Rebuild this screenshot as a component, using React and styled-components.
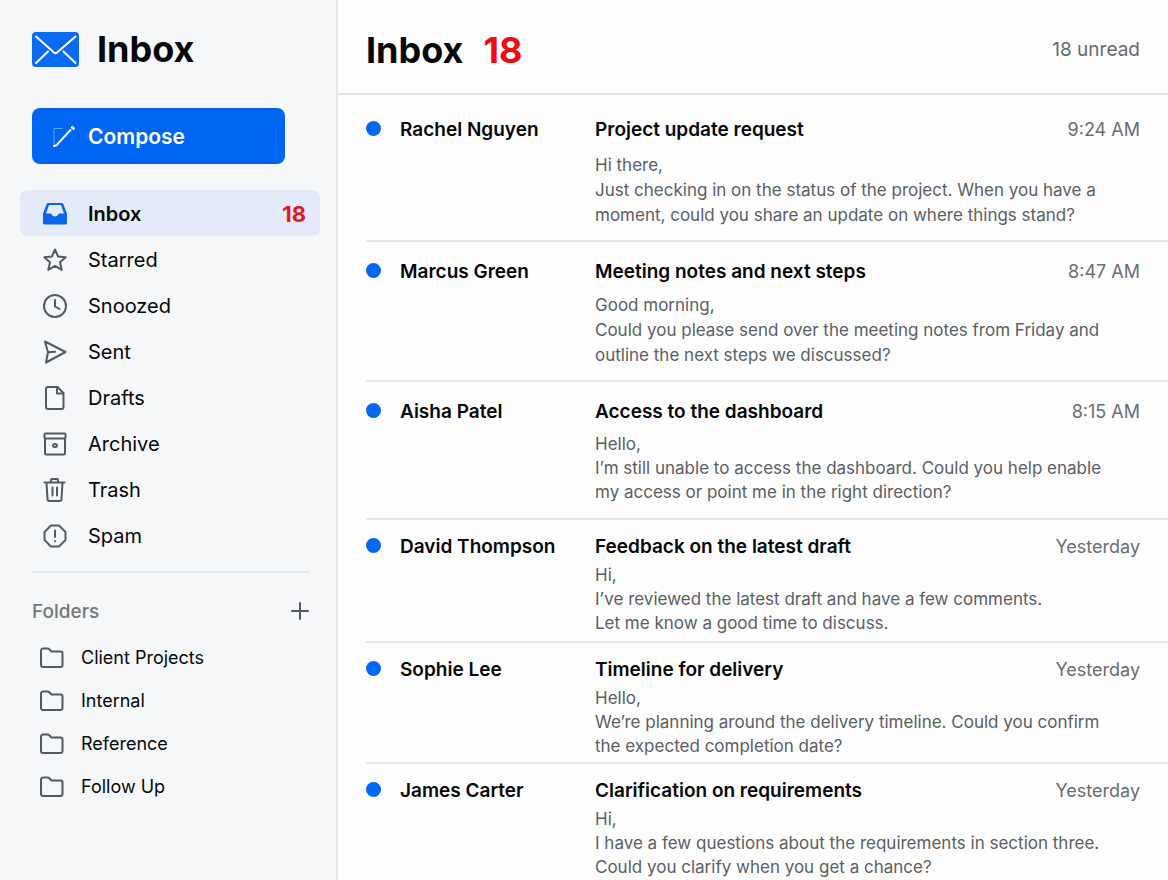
import React from 'react';
import styled, { createGlobalStyle } from 'styled-components';

const GlobalStyle = createGlobalStyle`
  * {
    box-sizing: border-box;
  }

  body {
    margin: 0;
    background: #fdfdfe;
    color: #060708;
    font-family: Inter, 'Liberation Sans', sans-serif;
  }

  button {
    border: 0;
    padding: 0;
    background: none;
    color: inherit;
    font: inherit;
    cursor: pointer;
  }
`;

// --- Layout ---
const Page = styled.div`
  display: grid;
  grid-template-columns: 338px minmax(0, 1fr);
  min-height: 100vh;
`;

const Sidebar = styled.aside`
  background: #f5f7f9;
  border-right: 2px solid #e6e8ee;
`;

const Main = styled.main`
  min-width: 0;
`;

// --- Sidebar ---
const Brand = styled.div`
  display: flex;
  align-items: center;
  gap: 18px;
  height: 98px;
  padding-left: 32px;
  font-size: 36px;
  font-weight: 700;
`;

const ComposeButton = styled.button`
  display: flex;
  align-items: center;
  gap: 12px;
  width: 253px;
  height: 56px;
  margin: 10px 0 26px 32px;
  padding-left: 20px;
  border-radius: 8px;
  background: #0066f2;
  color: #fff;
  font-size: 21px;
  font-weight: 600;
`;

const NavList = styled.ul`
  list-style: none;
  margin: 0;
  padding: 0 16px 0 20px;
`;

const NavLink = styled.a`
  display: flex;
  align-items: center;
  gap: 21px;
  height: 46px;
  padding: 1px 14px 0 23px;
  border-radius: 8px;
  background: ${(props) => (props.$active ? '#e4eaf7' : 'transparent')};
  color: inherit;
  font-size: 20px;
  font-weight: ${(props) => (props.$active ? 600 : 400)};
  text-decoration: none;
`;

const NavCount = styled.span`
  margin-left: auto;
  color: #e01b20;
  font-size: 22px;
  font-weight: 700;
`;

const Divider = styled.hr`
  margin: 13px 27px 0 32px;
  border: 0;
  border-top: 2px solid #e1e4e9;
`;

const FoldersHeader = styled.div`
  display: flex;
  align-items: center;
  justify-content: space-between;
  height: 63px;
  padding: 13px 24px 0 32px;
`;

const FoldersTitle = styled.h2`
  margin: 0;
  color: #74777d;
  font-size: 19px;
  font-weight: 500;
`;

const AddButton = styled.button`
  display: flex;
`;

const FolderLink = styled(NavLink)`
  gap: 17px;
  height: 43px;
  padding: 0 0 0 20px;
  font-size: 18px;
`;

// --- Message list ---
const Header = styled.header`
  display: flex;
  align-items: center;
  height: 95px;
  padding: 6px 28px 0;
  border-bottom: 2px solid #e0e2e7;
`;

const Heading = styled.h1`
  margin: 0;
  font-size: 36px;
  font-weight: 700;
`;

const HeadingCount = styled.span`
  margin-left: 20px;
  color: #ee0b12;
`;

const Unread = styled.span`
  margin-left: auto;
  color: #66696f;
  font-size: 19px;
`;

const MessageList = styled.ul`
  list-style: none;
  margin: 0;
  padding: 0 0 0 28px;
`;

const spacing = {
  roomy: { top: 23, gap: 11, line: 25, bottom: 12 },
  relaxed: { top: 18, gap: 9, line: 25, bottom: 12 },
  regular: { top: 18, gap: 8, line: 24, bottom: 14 },
  compact: { top: 15, gap: 4, line: 24, bottom: 6 },
  tight: { top: 15, gap: 4, line: 24, bottom: 4 },
};

const Message = styled.li`
  display: grid;
  grid-template-columns: 15px 176px minmax(0, 1fr) auto;
  column-gap: 19px;
  row-gap: ${(props) => spacing[props.$density].gap}px;
  padding: ${(props) => spacing[props.$density].top}px 28px ${(props) => spacing[props.$density].bottom}px 0;
  border-bottom: 2px solid #e4e6ea;
  line-height: 24px;

  &:last-child {
    padding-bottom: 0;
    border-bottom: 0;
  }
`;

const UnreadDot = styled.span`
  width: 15px;
  height: 15px;
  margin-top: 3px;
  border-radius: 50%;
  background: #0068f5;
`;

const Sender = styled.span`
  font-size: 19px;
  font-weight: 600;
`;

const Subject = styled.h3`
  margin: 0;
  font-size: 19px;
  font-weight: 600;
`;

const Preview = styled.p`
  grid-column: 3 / -1;
  margin: 0;
  color: #5b5e64;
  font-size: 17px;
  line-height: ${(props) => spacing[props.$density].line}px;
  white-space: pre-line;
`;

const Time = styled.time`
  color: #6a6d73;
  font-size: 18px;
`;

// --- Icons ---
const LineIcon = styled.svg`
  flex: none;
  width: 24px;
  height: 24px;
  fill: none;
  stroke: #555961;
  stroke-width: 2;
  stroke-linecap: round;
  stroke-linejoin: round;
`;

const MailLogo = () => (
  <svg width="47" height="35" viewBox="0 0 47 35" fill="none" stroke="#fff" strokeWidth="2" strokeLinecap="round" strokeLinejoin="round">
    <rect width="47" height="35" rx="4" fill="#0a6af0" stroke="none" />
    <path d="M4 4.500L22 20.500q1.500 1.200 3 0L43.500 4.500M4 31l12-11.500M43.500 31l-12-11.500" />
  </svg>
);

const ComposeIcon = () => (
  <svg width="24" height="24" viewBox="0 0 24 24" fill="none" strokeLinecap="round">
    <path d="M10 4.500H2V21" stroke="#5fa3fb" strokeWidth="1" />
    <path d="M2 22l2.500-.8L18.500 6" stroke="#fff" strokeWidth="2" />
    <path d="M20.200 3.300l1.300 1.200" stroke="#fff" strokeWidth="2.600" />
  </svg>
);

const icons = {
  star: <path d="M12 1.500l3.100 7 7.600.8-5.700 5 1.700 7.500L12 17.900l-6.700 3.900L7 14.300l-5.700-5 7.600-.8z" />,
  clock: (
    <>
      <circle cx="12" cy="12" r="11" />
      <path d="M12 6v6.500l4.500 2.500" />
    </>
  ),
  send: <path d="M2 1.500L22.500 12 3 22.500l2-10.300zM5 12.200l7-.4" />,
  file: (
    <>
      <path d="M5 1h9.500l6 6V21a2 2 0 0 1-2 2H5a2 2 0 0 1-2-2V3a2 2 0 0 1 2-2z" />
      <path d="M14 1.500v6h6" />
    </>
  ),
  archive: (
    <>
      <rect x="1.500" y="1.500" width="21" height="5" rx="1" />
      <path d="M2 7v14a1.500 1.500 0 0 0 1.500 1.500h17A1.500 1.500 0 0 0 22 21V7" />
      <ellipse cx="12" cy="13.500" rx="2" ry="1.500" />
    </>
  ),
  trash: <path d="M1.500 4.500h20M8 4V2a1 1 0 0 1 1-1h5a1 1 0 0 1 1 1v2M3.500 5l1 16a2 2 0 0 0 2 2h10a2 2 0 0 0 2-2l1-16M9.500 9.500v8M14 9.500v8" />,
  spam: (
    <>
      <path d="M8 1.500h8L22.500 8v8L16 22.500H8L1.500 16V8z" />
      <path d="M12 6.500v6.500M12 17v.2" />
    </>
  ),
  folder: <path d="M1 4.500a2 2 0 0 1 2-2h4.500q1 0 1.800.8L11.500 5.500h9a2 2 0 0 1 2 2V19a2 2 0 0 1-2 2H3a2 2 0 0 1-2-2z" />,
  plus: <path d="M12 4v16M4 12h16" />,
};

const Icon = ({ name }) => (
  <LineIcon viewBox="0 0 24 24" aria-hidden="true">
    {icons[name]}
  </LineIcon>
);

// Filled tray with the paper slot cut out of it
const InboxIcon = () => (
  <svg width="24" height="24" viewBox="0 0 24 24" fill="#0a66e8" fillRule="evenodd" aria-hidden="true">
    <path d="M5.500 1h13a2 2 0 0 1 1.900 1.300L24 11.500V21a1.500 1.500 0 0 1-1.500 1.500h-21A1.500 1.500 0 0 1 0 21v-9.500L3.600 2.300A2 2 0 0 1 5.500 1zM6 3L3 11.500h4.500c1.500 0 1.500 3 4.500 3s3-3 4.500-3H21L18 3z" />
  </svg>
);

// --- Data ---
const navItems = [
  { label: 'Starred', icon: 'star' },
  { label: 'Snoozed', icon: 'clock' },
  { label: 'Sent', icon: 'send' },
  { label: 'Drafts', icon: 'file' },
  { label: 'Archive', icon: 'archive' },
  { label: 'Trash', icon: 'trash' },
  { label: 'Spam', icon: 'spam' },
];

const folders = ['Client Projects', 'Internal', 'Reference', 'Follow Up'];

const messages = [
  {
    sender: 'Rachel Nguyen',
    subject: 'Project update request',
    time: '9:24 AM',
    density: 'roomy',
    preview: 'Hi there,\nJust checking in on the status of the project. When you have a\nmoment, could you share an update on where things stand?',
  },
  {
    sender: 'Marcus Green',
    subject: 'Meeting notes and next steps',
    time: '8:47 AM',
    density: 'relaxed',
    preview: 'Good morning,\nCould you please send over the meeting notes from Friday and\noutline the next steps we discussed?',
  },
  {
    sender: 'Aisha Patel',
    subject: 'Access to the dashboard',
    time: '8:15 AM',
    density: 'regular',
    preview: 'Hello,\nI’m still unable to access the dashboard. Could you help enable\nmy access or point me in the right direction?',
  },
  {
    sender: 'David Thompson',
    subject: 'Feedback on the latest draft',
    time: 'Yesterday',
    density: 'compact',
    preview: 'Hi,\nI’ve reviewed the latest draft and have a few comments.\nLet me know a good time to discuss.',
  },
  {
    sender: 'Sophie Lee',
    subject: 'Timeline for delivery',
    time: 'Yesterday',
    density: 'tight',
    preview: 'Hello,\nWe’re planning around the delivery timeline. Could you confirm\nthe expected completion date?',
  },
  {
    sender: 'James Carter',
    subject: 'Clarification on requirements',
    time: 'Yesterday',
    density: 'tight',
    preview: 'Hi,\nI have a few questions about the requirements in section three.\nCould you clarify when you get a chance?',
  },
];

const App = () => (
  <>
    <GlobalStyle />
    <Page>
      <Sidebar>
        <Brand>
          <MailLogo />
          Inbox
        </Brand>
        <ComposeButton type="button">
          <ComposeIcon />
          Compose
        </ComposeButton>
        <nav>
          <NavList>
            <li>
              <NavLink href="#inbox" $active>
                <InboxIcon />
                Inbox
                <NavCount>18</NavCount>
              </NavLink>
            </li>
            {navItems.map((item) => (
              <li key={item.label}>
                <NavLink href={`#${item.label.toLowerCase()}`}>
                  <Icon name={item.icon} />
                  {item.label}
                </NavLink>
              </li>
            ))}
          </NavList>
          <Divider />
          <FoldersHeader>
            <FoldersTitle>Folders</FoldersTitle>
            <AddButton type="button" aria-label="Add folder">
              <Icon name="plus" />
            </AddButton>
          </FoldersHeader>
          <NavList>
            {folders.map((folder) => (
              <li key={folder}>
                <FolderLink href="#folder">
                  <Icon name="folder" />
                  {folder}
                </FolderLink>
              </li>
            ))}
          </NavList>
        </nav>
      </Sidebar>
      <Main>
        <Header>
          <Heading>
            Inbox
            <HeadingCount>18</HeadingCount>
          </Heading>
          <Unread>18 unread</Unread>
        </Header>
        <MessageList>
          {messages.map((message) => (
            <Message key={message.sender} $density={message.density}>
              <UnreadDot />
              <Sender>{message.sender}</Sender>
              <Subject>{message.subject}</Subject>
              <Time>{message.time}</Time>
              <Preview $density={message.density}>{message.preview}</Preview>
            </Message>
          ))}
        </MessageList>
      </Main>
    </Page>
  </>
);

export default App;
